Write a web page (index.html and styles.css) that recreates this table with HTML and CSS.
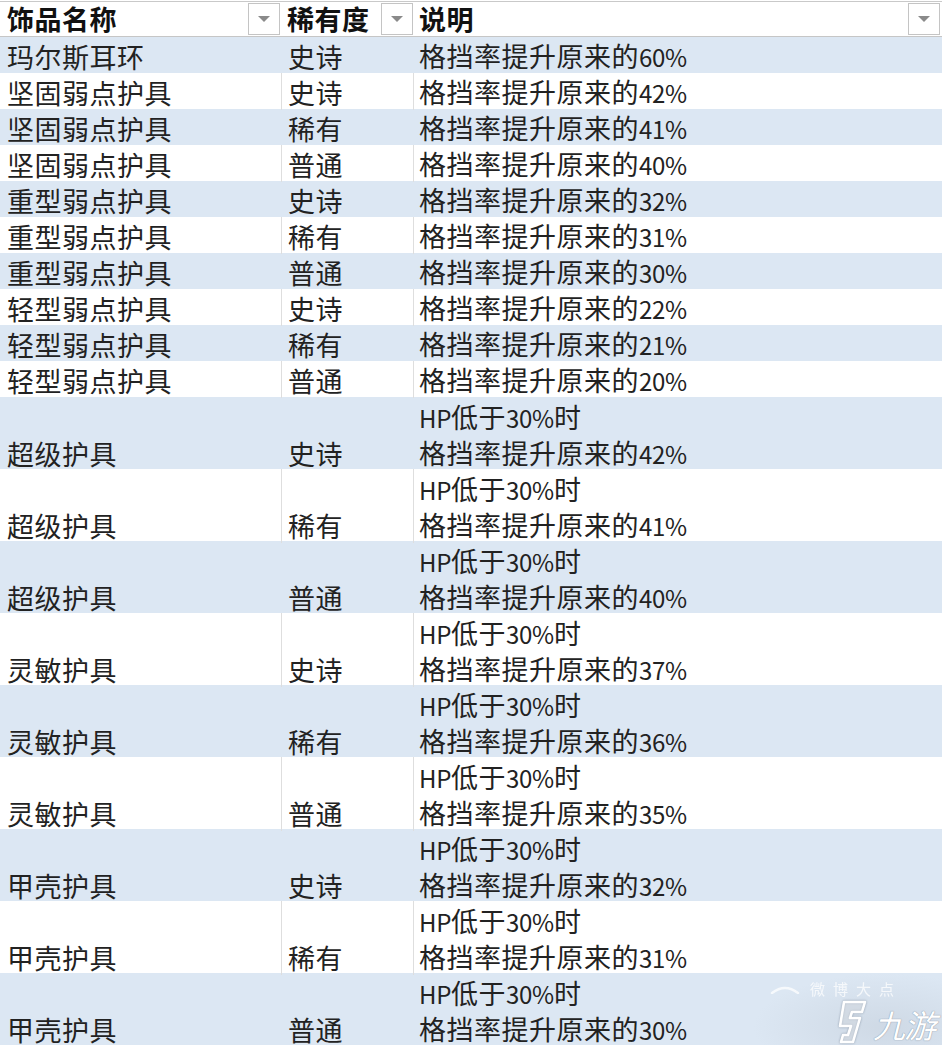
FILE: index.html
```html
<!DOCTYPE html>
<html lang="zh">
<head>
<meta charset="utf-8">
<title>饰品表</title>
<link rel="stylesheet" href="styles.css">
</head>
<body>
<div class="sheet">
  <div class="row head">
    <div class="cell c1"><span class="label">饰品名称</span><span class="dd"><i></i></span></div>
    <div class="cell c2"><span class="label">稀有度</span><span class="dd"><i></i></span></div>
    <div class="cell c3"><span class="label">说明</span><span class="dd"><i></i></span></div>
  </div>
  <div class="row band"><div class="cell c1">玛尔斯耳环</div><div class="cell c2">史诗</div><div class="cell c3"><span>格挡率提升原来的<span class="n">60%</span></span></div></div>
  <div class="row"><div class="cell c1">坚固弱点护具</div><div class="cell c2">史诗</div><div class="cell c3"><span>格挡率提升原来的<span class="n">42%</span></span></div></div>
  <div class="row band"><div class="cell c1">坚固弱点护具</div><div class="cell c2">稀有</div><div class="cell c3"><span>格挡率提升原来的<span class="n">41%</span></span></div></div>
  <div class="row"><div class="cell c1">坚固弱点护具</div><div class="cell c2">普通</div><div class="cell c3"><span>格挡率提升原来的<span class="n">40%</span></span></div></div>
  <div class="row band"><div class="cell c1">重型弱点护具</div><div class="cell c2">史诗</div><div class="cell c3"><span>格挡率提升原来的<span class="n">32%</span></span></div></div>
  <div class="row"><div class="cell c1">重型弱点护具</div><div class="cell c2">稀有</div><div class="cell c3"><span>格挡率提升原来的<span class="n">31%</span></span></div></div>
  <div class="row band"><div class="cell c1">重型弱点护具</div><div class="cell c2">普通</div><div class="cell c3"><span>格挡率提升原来的<span class="n">30%</span></span></div></div>
  <div class="row"><div class="cell c1">轻型弱点护具</div><div class="cell c2">史诗</div><div class="cell c3"><span>格挡率提升原来的<span class="n">22%</span></span></div></div>
  <div class="row band"><div class="cell c1">轻型弱点护具</div><div class="cell c2">稀有</div><div class="cell c3"><span>格挡率提升原来的<span class="n">21%</span></span></div></div>
  <div class="row"><div class="cell c1">轻型弱点护具</div><div class="cell c2">普通</div><div class="cell c3"><span>格挡率提升原来的<span class="n">20%</span></span></div></div>
  <div class="row tall band"><div class="cell c1">超级护具</div><div class="cell c2">史诗</div><div class="cell c3"><span><span class="n">HP</span>低于<span class="n">30%</span>时</span><span>格挡率提升原来的<span class="n">42%</span></span></div></div>
  <div class="row tall"><div class="cell c1">超级护具</div><div class="cell c2">稀有</div><div class="cell c3"><span><span class="n">HP</span>低于<span class="n">30%</span>时</span><span>格挡率提升原来的<span class="n">41%</span></span></div></div>
  <div class="row tall band"><div class="cell c1">超级护具</div><div class="cell c2">普通</div><div class="cell c3"><span><span class="n">HP</span>低于<span class="n">30%</span>时</span><span>格挡率提升原来的<span class="n">40%</span></span></div></div>
  <div class="row tall"><div class="cell c1">灵敏护具</div><div class="cell c2">史诗</div><div class="cell c3"><span><span class="n">HP</span>低于<span class="n">30%</span>时</span><span>格挡率提升原来的<span class="n">37%</span></span></div></div>
  <div class="row tall band"><div class="cell c1">灵敏护具</div><div class="cell c2">稀有</div><div class="cell c3"><span><span class="n">HP</span>低于<span class="n">30%</span>时</span><span>格挡率提升原来的<span class="n">36%</span></span></div></div>
  <div class="row tall"><div class="cell c1">灵敏护具</div><div class="cell c2">普通</div><div class="cell c3"><span><span class="n">HP</span>低于<span class="n">30%</span>时</span><span>格挡率提升原来的<span class="n">35%</span></span></div></div>
  <div class="row tall band"><div class="cell c1">甲壳护具</div><div class="cell c2">史诗</div><div class="cell c3"><span><span class="n">HP</span>低于<span class="n">30%</span>时</span><span>格挡率提升原来的<span class="n">32%</span></span></div></div>
  <div class="row tall"><div class="cell c1">甲壳护具</div><div class="cell c2">稀有</div><div class="cell c3"><span><span class="n">HP</span>低于<span class="n">30%</span>时</span><span>格挡率提升原来的<span class="n">31%</span></span></div></div>
  <div class="row tall band"><div class="cell c1">甲壳护具</div><div class="cell c2">普通</div><div class="cell c3"><span><span class="n">HP</span>低于<span class="n">30%</span>时</span><span>格挡率提升原来的<span class="n">30%</span></span></div></div>

  <div class="watermark">
    <div class="wm-top">
      <svg class="wm-arc" viewBox="0 0 30 10" width="30" height="10"><path d="M2 9 Q15 -1 28 9" fill="none" stroke="#ffffff" stroke-width="2.4" stroke-linecap="round"/></svg>
      <span class="wm-small">微博大点</span>
    </div>
    <div class="wm-brand">
      <svg class="wm-logo" viewBox="0 0 36 46" width="36" height="46">
        <path d="M12 3 L33 3 L30 13 L20 13 L18 19 L28 19 L21 43 L9 43 L11 36 L16 36 L19 27 L8 27 Z" fill="#ffffff" fill-opacity="0.35" stroke="#ffffff" stroke-width="2.6" stroke-linejoin="round"/>
      </svg>
      <span class="wm-text">九游</span>
    </div>
  </div>
</div>
</body>
</html>
```

FILE: styles.css
```css
* { box-sizing: border-box; }
html, body {
  margin: 0;
  padding: 0;
  background: #ffffff;
}
body {
  font-family: "Noto Sans CJK SC", "Noto Sans", sans-serif;
  color: #222222;
  width: 942px;
  overflow: hidden;
}
.sheet {
  position: relative;
  width: 942px;
  border-top: 1px solid #c9c9c9;
  margin-top: 1px;
}
.row {
  display: grid;
  grid-template-columns: 282px 132px 528px;
  height: 36px;
  background: #ffffff;
}
.row.tall { height: 72px; }
.row.band { background: #dce7f3; }
.cell {
  font-size: 27px;
  letter-spacing: 0.5px;
  line-height: 34px;
  padding: 2px 0 0 7px;
  white-space: nowrap;
  display: flex;
  flex-direction: column;
  justify-content: flex-end;
}
.row.tall .cell { line-height: 35px; }
.c2 { padding-left: 6px; }
.c3 { padding-left: 5px; }
.n {
  font-size: 24px;
  letter-spacing: -0.3px;
}
.row:not(.band):not(.head) .c1,
.row:not(.band):not(.head) .c2 {
  border-right: 1px solid #dedede;
}
.row.head {
  height: 35px;
  border-bottom: 1px solid #c6c6c6;
}
.head .cell {
  flex-direction: row;
  justify-content: space-between;
  align-items: center;
  padding: 0 2px 0 7px;
  font-weight: 700;
  line-height: 34px;
  color: #111111;
}
.head .c2 { padding-left: 5px; padding-right: 1px; }
.head .c3 { padding-left: 5px; padding-right: 2px; }
.dd {
  width: 32px;
  height: 32px;
  border: 1px solid #c4c4c4;
  background: #ffffff;
  display: flex;
  align-items: center;
  justify-content: center;
  flex: none;
}
.dd i {
  width: 0;
  height: 0;
  border-left: 6px solid transparent;
  border-right: 6px solid transparent;
  border-top: 6px solid #8a8a8a;
}
.watermark {
  position: absolute;
  right: 0;
  bottom: 0;
  width: 190px;
  height: 72px;
  pointer-events: none;
  background: radial-gradient(ellipse at 70% 75%, rgba(190,200,212,0.45), rgba(220,231,243,0) 70%);
}
.wm-top {
  position: absolute;
  left: 18px;
  top: 8px;
  display: flex;
  align-items: center;
  gap: 10px;
  opacity: 0.75;
}
.wm-small {
  font-size: 15px;
  line-height: 16px;
  color: #ffffff;
  letter-spacing: 8px;
}
.wm-brand {
  position: absolute;
  left: 80px;
  bottom: 0;
  display: flex;
  align-items: center;
  gap: 5px;
}
.wm-text {
  font-size: 32px;
  font-style: italic;
  font-weight: 400;
  color: #ffffff;
  text-shadow: 0 0 1px #8c9aab, 0 0 1px #8c9aab;
  line-height: 34px;
  margin-top: 4px;
  letter-spacing: -1px;
}
.wm-logo { filter: drop-shadow(0 0 1px #8c9aab); }
```
